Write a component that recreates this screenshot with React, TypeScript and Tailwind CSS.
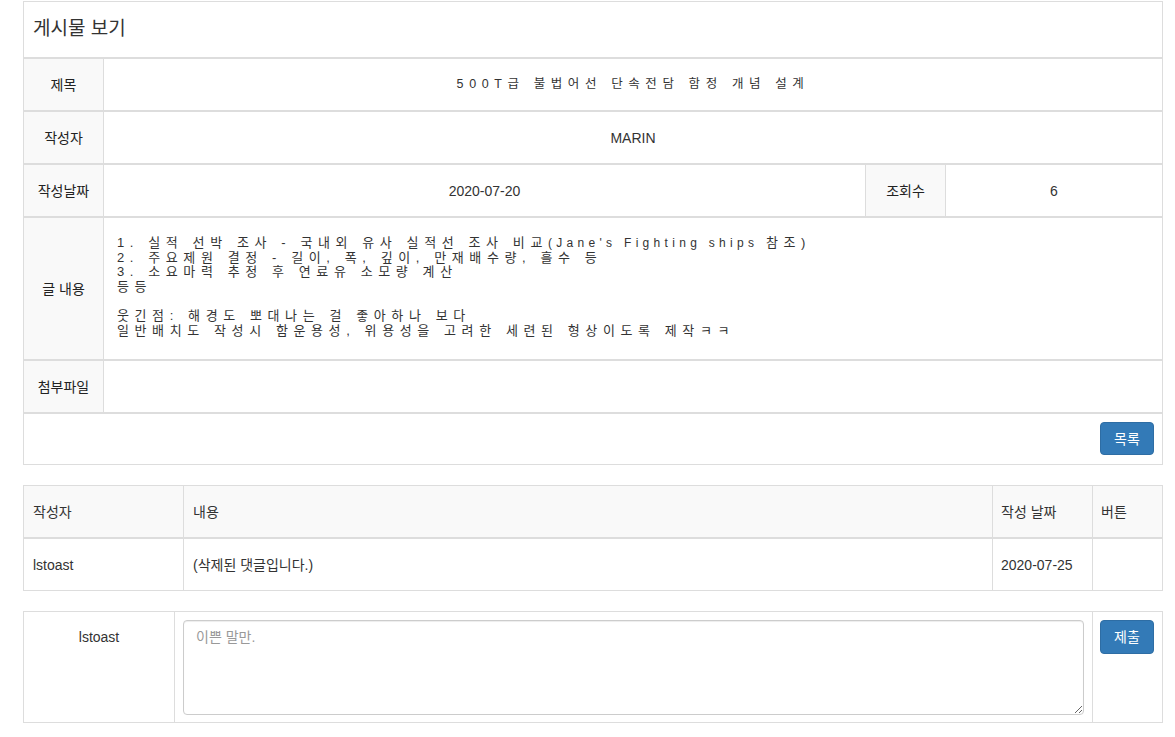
const font = "font-['Liberation_Sans','Noto_Sans_CJK_KR',sans-serif]";

function Label({ children }: { children: React.ReactNode }) {
  return (
    <div className="w-[80px] shrink-0 bg-[#f9f9f9] border-r border-[#ddd] flex items-center justify-center text-sm text-[#222]">
      {children}
    </div>
  );
}

export default function App() {
  return (
    <div className={font + " bg-white min-h-[737px] text-[#333] pt-px"}>
      {/* 게시물 보기 */}
      <div className="ml-[23px] w-[1140px] border border-[#ddd]">
        <div className="h-[55px] flex items-center pl-[9px] text-[19px] text-[#333]">게시물 보기</div>

        <div className="flex h-[53px] border-t-2 border-[#ddd]">
          <Label>제목</Label>
          <div className="flex-1 flex items-center justify-center text-[12.5px] tracking-[5.6px] text-[#333]">
            500T급 불법어선 단속전담 함정 개념 설계
          </div>
        </div>

        <div className="flex h-[53px] border-t-2 border-[#ddd]">
          <Label>작성자</Label>
          <div className="flex-1 flex items-center justify-center text-sm">MARIN</div>
        </div>

        <div className="flex h-[53px] border-t-2 border-[#ddd]">
          <Label>작성날짜</Label>
          <div className="w-[762px] shrink-0 border-r border-[#ddd] flex items-center justify-center text-sm">
            2020-07-20
          </div>
          <Label>조회수</Label>
          <div className="flex-1 flex items-center justify-center text-sm">6</div>
        </div>

        <div className="flex h-[143px] border-t-2 border-[#ddd]">
          <Label>글 내용</Label>
          <div className="flex-1 pl-[13px] pt-[18px] whitespace-pre text-[13px] leading-[14.6px] tracking-[5.6px] text-[#333]">
            <div>
              {"1. 실적 선박 조사 - 국내외 유사 실적선 조사 비교"}
              <span className="text-[12px] tracking-[4.3px]">{"(Jane's Fighting ships "}</span>
              {"참조)"}
            </div>
            <div>2. 주요제원 결정 - 길이, 폭, 깊이, 만재배수량, 흘수 등</div>
            <div>3. 소요마력 추정 후 연료유 소모량 계산</div>
            <div>등등</div>
            <div>&nbsp;</div>
            <div>웃긴점: 해경도 뽀대나는 걸 좋아하나 보다</div>
            <div>일반배치도 작성시 함운용성, 위용성을 고려한 세련된 형상이도록 제작ㅋㅋ</div>
          </div>
        </div>

        <div className="flex h-[53px] border-t-2 border-[#ddd]">
          <Label>첨부파일</Label>
          <div className="flex-1" />
        </div>

        <div className="flex h-[52px] border-t-2 border-[#ddd] justify-end pt-2 pr-2">
          <button className="w-[54px] h-[33px] rounded border border-[#2e6da4] bg-[#337ab7] text-white text-sm">
            목록
          </button>
        </div>
      </div>

      {/* 댓글 목록 */}
      <div className="ml-[23px] mt-5 w-[1140px] border border-[#ddd] text-sm">
        <div className="flex h-[51px] bg-[#f9f9f9]">
          <div className="w-[160px] shrink-0 border-r border-[#ddd] flex items-center pl-[9px]">작성자</div>
          <div className="w-[809px] shrink-0 border-r border-[#ddd] flex items-center pl-[9px]">내용</div>
          <div className="w-[100px] shrink-0 border-r border-[#ddd] flex items-center pl-[8px]">작성 날짜</div>
          <div className="flex-1 flex items-center pl-[8px]">버튼</div>
        </div>
        <div className="flex h-[53px] border-t-2 border-[#ddd]">
          <div className="w-[160px] shrink-0 border-r border-[#ddd] flex items-center pl-[9px]">lstoast</div>
          <div className="w-[809px] shrink-0 border-r border-[#ddd] flex items-center pl-[9px]">(삭제된 댓글입니다.)</div>
          <div className="w-[100px] shrink-0 border-r border-[#ddd] flex items-center pl-[8px]">2020-07-25</div>
          <div className="flex-1" />
        </div>
      </div>

      {/* 댓글 쓰기 */}
      <div className="ml-[23px] mt-5 w-[1140px] border border-[#ddd] flex h-[112px] text-sm">
        <div className="w-[151px] shrink-0 border-r border-[#ddd] flex justify-center pt-[15px]">lstoast</div>
        <div className="w-[918px] shrink-0 border-r border-[#ddd] pl-2 pt-2">
          <textarea
            placeholder="이쁜 말만."
            className="block w-[901px] h-[95px] rounded border border-[#ccc] shadow-[inset_0_1px_1px_rgba(0,0,0,0.075)] px-3 py-1.5 text-sm text-[#555] placeholder:text-[#999] outline-none"
          />
        </div>
        <div className="flex-1 pl-[7px] pt-2">
          <button className="w-[54px] h-[34px] rounded border border-[#2e6da4] bg-[#337ab7] text-white text-sm">
            제출
          </button>
        </div>
      </div>
    </div>
  );
}
